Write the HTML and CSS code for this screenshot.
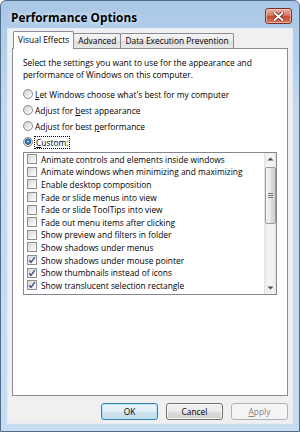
FILE: index.html
```html
<!DOCTYPE html>
<html>
<head>
<meta charset="utf-8">
<title>Performance Options</title>
<link rel="stylesheet" href="styles.css">
</head>
<body>
<div class="window">
  <div class="titlebar">
    <span class="title">Performance Options</span>
    <span class="close">
      <svg width="11" height="9" viewBox="0 0 11 9"><path d="M1.5 1 L9.5 8 M9.5 1 L1.5 8" stroke="#5a1a12" stroke-width="3.4" stroke-linecap="round"/><path d="M1.5 1 L9.5 8 M9.5 1 L1.5 8" stroke="#ffffff" stroke-width="2" stroke-linecap="round"/></svg>
    </span>
  </div>
  <div class="client">
    <div class="tabs">
      <div class="tab active">Visual Effects</div>
      <div class="tab">Advanced</div>
      <div class="tab">Data Execution Prevention</div>
    </div>
    <div class="panel">
      <p class="desc">Select the settings you want to use for the appearance and<br>performance of Windows on this computer.</p>
      <div class="options">
        <div class="opt"><span class="rb"></span><span><u>L</u>et Windows choose what's best for my computer</span></div>
        <div class="opt"><span class="rb"></span><span>Adjust for <u>b</u>est appearance</span></div>
        <div class="opt"><span class="rb"></span><span>Adjust for best <u>p</u>erformance</span></div>
        <div class="opt"><span class="rb on"></span><span class="focus"><u>C</u>ustom:</span></div>
      </div>
      <div class="listbox">
        <div class="items">
          <div class="item"><span class="cb"></span>Animate controls and elements inside windows</div>
          <div class="item"><span class="cb"></span>Animate windows when minimizing and maximizing</div>
          <div class="item"><span class="cb"></span>Enable desktop composition</div>
          <div class="item"><span class="cb"></span>Fade or slide menus into view</div>
          <div class="item"><span class="cb"></span>Fade or slide ToolTips into view</div>
          <div class="item"><span class="cb"></span>Fade out menu items after clicking</div>
          <div class="item"><span class="cb"></span>Show preview and filters in folder</div>
          <div class="item"><span class="cb"></span>Show shadows under menus</div>
          <div class="item"><span class="cb"><svg width="8" height="8" viewBox="0 0 8 8"><path d="M1.2 4.2 L3 6.4 L6.8 1.2" fill="none" stroke="#3d4f86" stroke-width="1.4"/></svg></span>Show shadows under mouse pointer</div>
          <div class="item"><span class="cb"><svg width="8" height="8" viewBox="0 0 8 8"><path d="M1.2 4.2 L3 6.4 L6.8 1.2" fill="none" stroke="#3d4f86" stroke-width="1.4"/></svg></span>Show thumbnails instead of icons</div>
          <div class="item"><span class="cb"><svg width="8" height="8" viewBox="0 0 8 8"><path d="M1.2 4.2 L3 6.4 L6.8 1.2" fill="none" stroke="#3d4f86" stroke-width="1.4"/></svg></span>Show translucent selection rectangle</div>
        </div>
        <div class="scrollbar">
          <div class="arrow"><svg width="7" height="4" viewBox="0 0 7 4"><path d="M0.5 3.5 L3.5 0.5 L6.5 3.5 Z" fill="#4d4d4d"/></svg></div>
          <div class="thumb"><span class="grip"></span></div>
          <div class="track"></div>
          <div class="arrow"><svg width="7" height="4" viewBox="0 0 7 4"><path d="M0.5 0.5 L3.5 3.5 L6.5 0.5 Z" fill="#4d4d4d"/></svg></div>
        </div>
      </div>
    </div>
    <div class="buttons">
      <div class="btn default">OK</div>
      <div class="btn">Cancel</div>
      <div class="btn disabled"><span><u>A</u>pply</span></div>
    </div>
  </div>
</div>
</body>
</html>
```
FILE: styles.css
```css
* { box-sizing: border-box; }
html, body { margin: 0; padding: 0; }
body {
  width: 300px;
  height: 432px;
  overflow: hidden;
  font-family: "Open Sans", "Noto Sans", sans-serif;
  font-size: 8.4px;
  color: #000;
  background: #fff;
}
.window {
  width: 300px;
  height: 432px;
  display: flex;
  flex-direction: column;
  border: 1px solid #4f6d8c;
  border-radius: 6px 6px 0 0;
  background: linear-gradient(180deg, #a9c7e6 0%, #c3d9ef 25%, #c8dcf0 100%);
  padding: 0 6px 7px;
}
.titlebar {
  height: 27px;
  flex: none;
  display: flex;
  align-items: flex-start;
  justify-content: space-between;
  padding-left: 4px;
}
.title {
  margin-top: 9px;
  font-size: 11.8px;
  line-height: 14px;
  font-weight: 700;
  text-shadow: 0 0 5px rgba(255,255,255,0.9);
}
.close {
  width: 27px;
  height: 16px;
  margin-top: 7px;
  margin-right: 1px;
  border: 1px solid #7a2f26;
  border-radius: 3px;
  background: linear-gradient(180deg, #eab0a2 0%, #d97a66 45%, #c84a33 52%, #d8765e 100%);
  box-shadow: inset 0 0 0 1px rgba(255,220,210,0.6);
  display: flex;
  align-items: center;
  justify-content: center;
}
.client {
  flex: 1;
  background: #f0f0f0;
  border: 1px solid #e4edf7;
  padding: 2px 4px 0;
  display: flex;
  flex-direction: column;
}
.tabs {
  height: 17px;
  flex: none;
  display: flex;
  align-items: flex-end;
  padding-left: 1px;
  position: relative;
  z-index: 1;
}
.tab {
  height: 15px;
  line-height: 13px;
  padding: 0 4px;
  margin-right: -1px;
  border: 1px solid #898c95;
  border-bottom: none;
  border-radius: 2px 2px 0 0;
  background: linear-gradient(180deg, #f4f4f4 0%, #ebebeb 50%, #dedede 51%, #e8e8e8 100%);
  white-space: nowrap;
}
.tab.active {
  height: 18px;
  line-height: 15px;
  margin-bottom: -1px;
  background: #fff;
  position: relative;
  z-index: 2;
}
.panel {
  height: 348px;
  flex: none;
  border: 1px solid #898c95;
  background: #fff;
  padding: 8px 10px 0;
}
.desc {
  margin: 0;
  line-height: 11.5px;
  white-space: nowrap;
}
.options {
  margin-top: 6px;
  display: flex;
  flex-direction: column;
}
.opt {
  height: 16px;
  display: flex;
  align-items: center;
  gap: 2px;
  white-space: nowrap;
}
.rb {
  width: 10px;
  height: 10px;
  flex: none;
  border-radius: 50%;
  border: 1px solid #8b8b8b;
  background: linear-gradient(135deg, #cfcfcf 0%, #f2f2f2 70%, #ffffff 100%);
}
.rb.on {
  background: radial-gradient(circle at 50% 45%, #9be0f5 0, #3d88c0 1.6px, #1d4f7c 2.8px, #cfd6dc 3.4px, #eeeeee 4.5px);
}
.focus {
  outline: 1px dotted #000;
  outline-offset: 0;
  padding: 0 1px;
  line-height: 11px;
}
.listbox {
  margin-top: 2px;
  height: 143px;
  border: 1px solid #828790;
  display: flex;
}
.items {
  flex: 1;
  overflow: hidden;
  padding-left: 3px;
}
.item {
  height: 12.6px;
  display: flex;
  align-items: center;
  gap: 4px;
  white-space: nowrap;
}
.cb {
  width: 10px;
  height: 10px;
  flex: none;
  border: 1px solid #8f8f8f;
  background: linear-gradient(135deg, #d6d6d6 0%, #f4f4f4 70%, #ffffff 100%);
  display: flex;
  align-items: center;
  justify-content: center;
}
.scrollbar {
  width: 12px;
  flex: none;
  display: flex;
  flex-direction: column;
  align-items: center;
  background: linear-gradient(90deg, #e3e3e3 0%, #f3f3f3 30%, #f3f3f3 70%, #e6e6e6 100%);
}
.arrow {
  width: 12px;
  height: 12px;
  flex: none;
  display: flex;
  align-items: center;
  justify-content: center;
}
.thumb {
  margin-top: 2px;
  width: 11px;
  height: 57px;
  flex: none;
  border: 1px solid #9a9a9a;
  border-radius: 2px;
  background: linear-gradient(90deg, #f6f6f6 0%, #e9e9e9 50%, #dcdcdc 51%, #d2d2d2 100%);
  display: flex;
  align-items: center;
  justify-content: center;
}
.grip {
  width: 5px;
  height: 5px;
  border-top: 1px solid #7a7a7a;
  border-bottom: 1px solid #7a7a7a;
  background: linear-gradient(180deg, transparent 1px, #7a7a7a 1px, #7a7a7a 2px, transparent 2px);
}
.track { flex: 1; }
.buttons {
  margin-top: 7px;
  display: flex;
  justify-content: flex-end;
  gap: 8px;
}
.btn {
  width: 57px;
  height: 17px;
  border: 1px solid #707070;
  border-radius: 3px;
  background: linear-gradient(180deg, #f2f2f2 0%, #ebebeb 50%, #dddddd 51%, #cfcfcf 100%);
  box-shadow: inset 0 0 0 1px rgba(255,255,255,0.75);
  display: flex;
  align-items: center;
  justify-content: center;
}
.btn.default {
  border-color: #3c7fb1;
  box-shadow: inset 0 0 0 1px #b7e4f7;
  background: linear-gradient(180deg, #eaf5fb 0%, #e0eef6 50%, #cfe3ee 51%, #c4dce9 100%);
}
.btn.disabled {
  border-color: #adb2b5;
  background: #f4f4f4;
  box-shadow: none;
  color: #838383;
}
```
